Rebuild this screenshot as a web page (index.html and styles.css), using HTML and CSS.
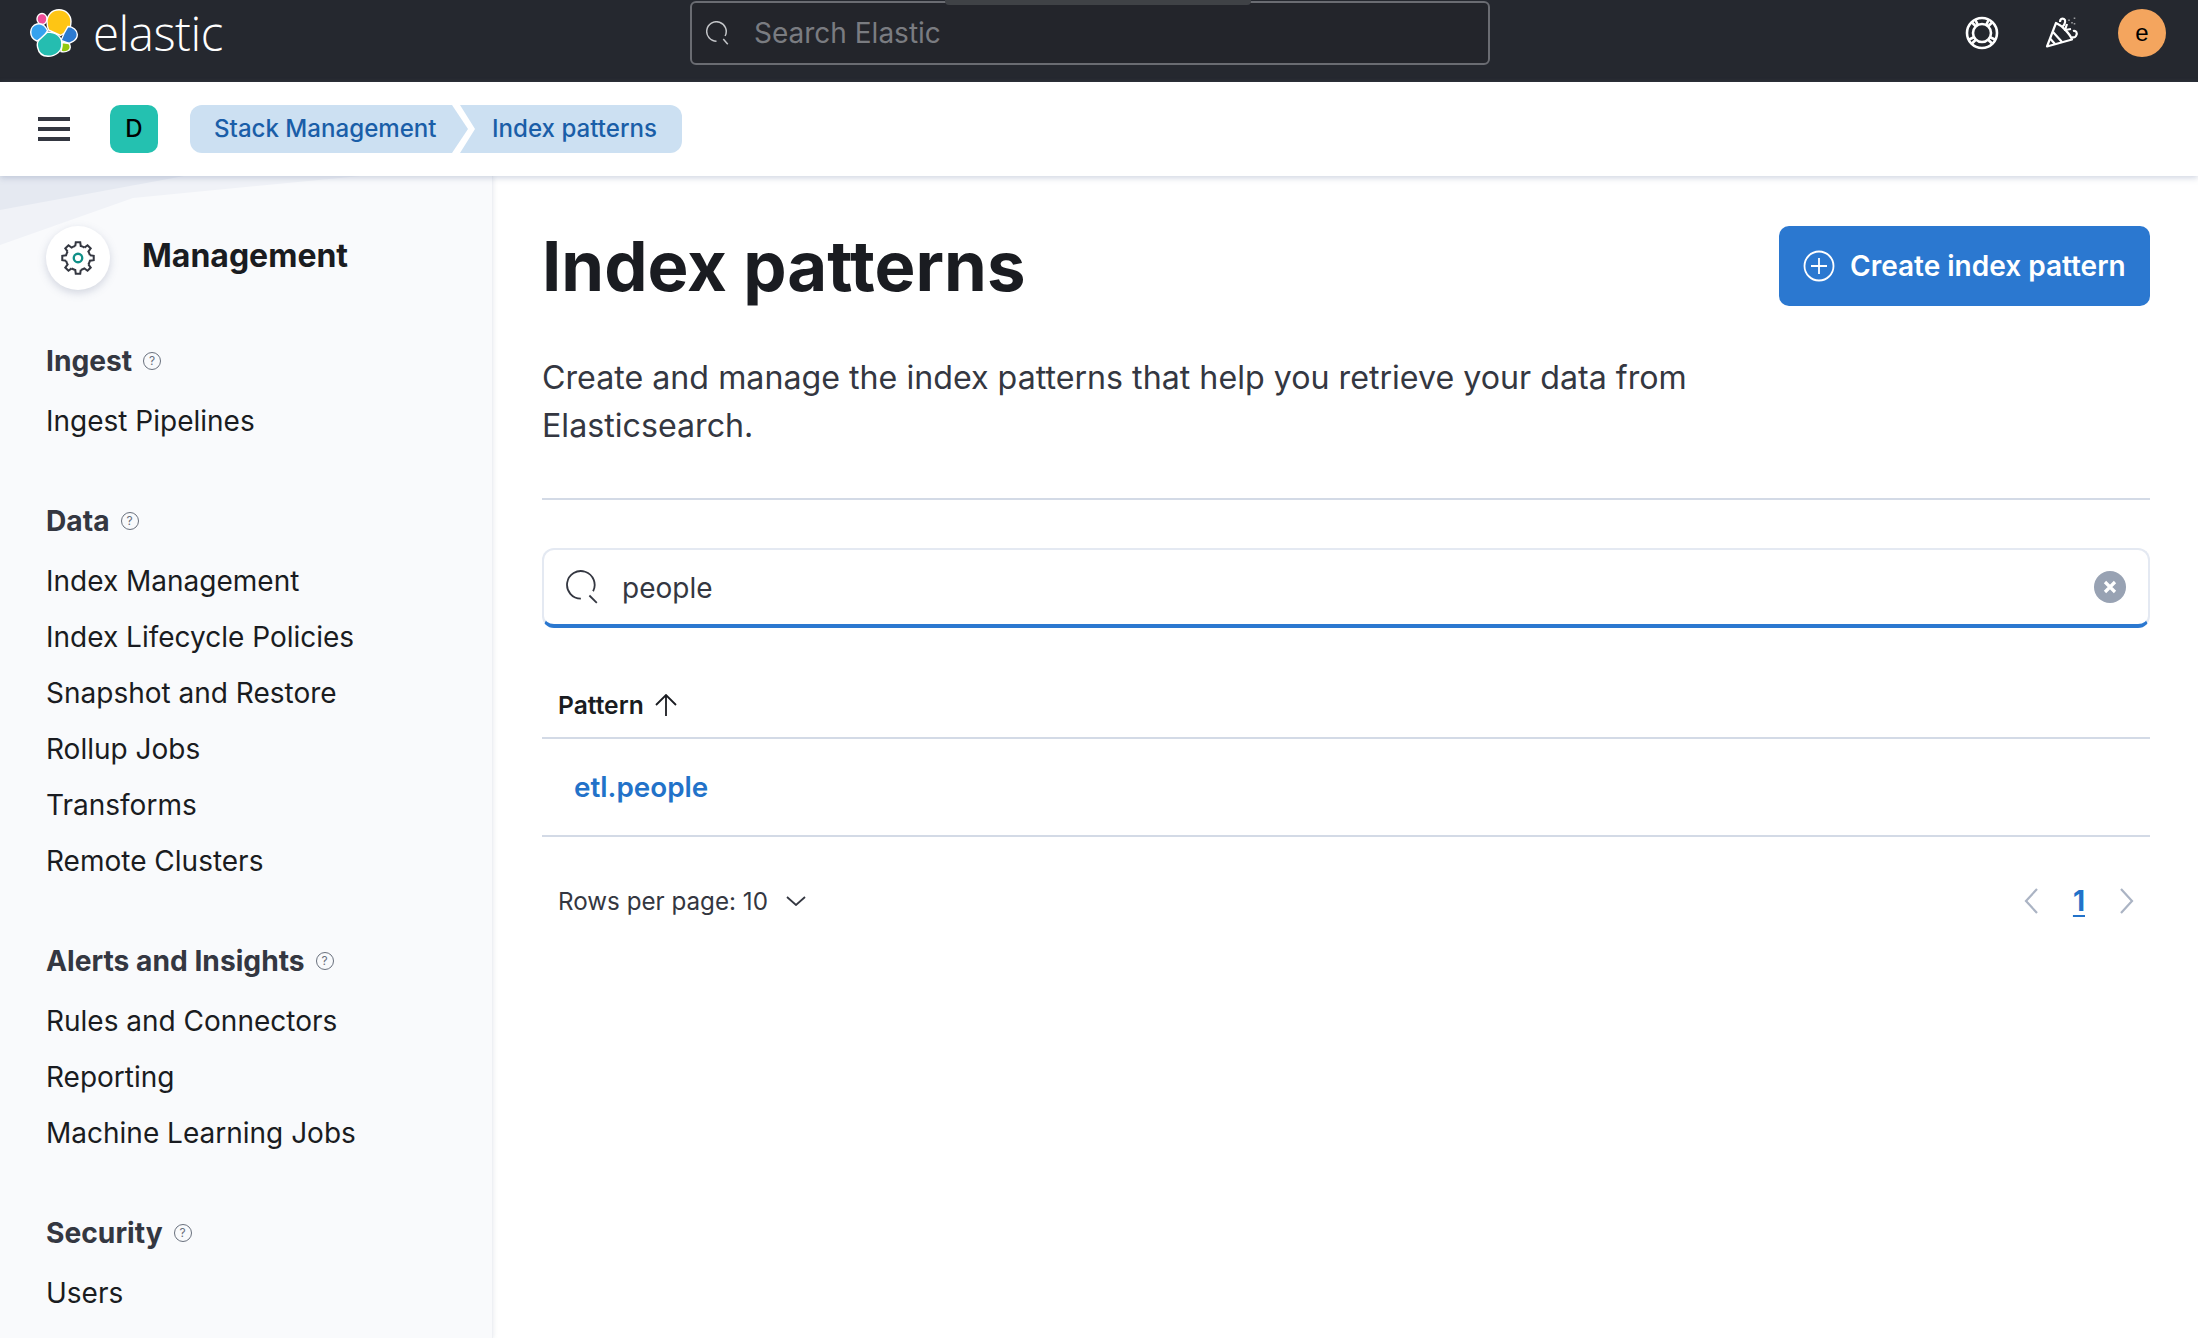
FILE: index.html
```html
<!DOCTYPE html>
<html lang="en">
<head>
    <meta charset="UTF-8">
    <title>Index patterns - Elastic</title>
    <link rel="stylesheet" href="styles.css">
</head>
<body>
    <svg class="defs" width="0" height="0">
        <defs>
            <path id="gear-tooth" d="M13.4 4.8 13.9 1.2H18.1L18.6 4.8A11.5 11.5 0 0 1 22.1 6.25"/>
        </defs>
    </svg>

    <header class="topbar">
        <div class="brand">
            <svg class="logo" width="48" height="48" viewBox="0 0 48 48">
                <g stroke="#fff" stroke-width="1.4">
                    <ellipse cx="12" cy="10" rx="5" ry="5.5" fill="#f04e98"/>
                    <path d="M29 .8C36 .8 41 6 41 12.5 41 17 39.5 21 36 23L30.5 26.5 18.5 21C17.5 18 17 16 17 13 17 6 22 .8 29 .8Z" fill="#fec514"/>
                    <path d="M7 15C11 14 15 16.500 17.500 21.500L14 27.500 7 32C3 30.500 .7 27 .7 23 .7 19.500 3 16 7 15Z" fill="#36a2ef"/>
                    <path d="M38 17.500C43 17.500 47.300 21.500 47.300 25.500 47.300 29 45.500 31 43 32.500L39 34.500 31 31.500 34 24.500Z" fill="#2c7ad0"/>
                    <path d="M17.500 23C25 23 32 27 32 35 32 42 26 47.300 18 47.300 12 47.300 8.500 43 7.500 38 7 35 7 33 9 31Z" fill="#25bdb0"/>
                    <path d="M32 33.500 39 34.500C41 37 40.500 40 38.500 41.500 36 43 33 43 31 42.500 32 39 32.500 36 32 33.500Z" fill="#93c90e"/>
                </g>
            </svg>
            <span class="wordmark">elastic</span>
        </div>
        <div class="global-search">
            <div class="search-tab"></div>
            <svg width="24" height="24" viewBox="0 0 32 32" fill="none" stroke="#c4c6c9" stroke-width="2">
                <path d="M25.500 20A13 13 0 1 0 14 27"/>
                <path d="M23 24 29 31"/>
            </svg>
            <span>Search Elastic</span>
        </div>
        <div class="top-actions">
            <svg width="34" height="34" viewBox="0 0 34 34" fill="none" stroke="#fff" stroke-width="2.600">
                <circle cx="17" cy="17" r="15"/>
                <circle cx="17" cy="17" r="9"/>
                <path d="M7 6.500 11 10.500M10.500 4 13 9.500M27 6.500 23 10.500M23.500 4 21 9.500M7 27.500 11 23.500M4 23.500 9.500 21M27 27.500 23 23.500M30 23.500 24.500 21"/>
            </svg>
            <svg width="34" height="34" viewBox="0 0 34 34" fill="none" stroke="#fff" stroke-width="2.200" stroke-linejoin="round">
                <path d="M11 7 2 30.500 27 23.500C25 18 17 9.500 11 7Z"/>
                <path d="M8 16 17 26M5.500 23 10 28"/>
                <path d="M15 6C15 3 17 2 19 3 21 4 20 7 19 9L17 11"/>
                <path d="M22 8 20 14 26 13"/>
                <path d="M28 15C31 14 33 17 31 20 30 21.500 28 21.500 27 21"/>
                <path d="M24 3.500V5M27 6V7.500M29.500 1.500V3M29.500 7V8.500" stroke="#9a9b9e" stroke-width="1.600"/>
            </svg>
            <div class="avatar-user">e</div>
        </div>
    </header>

    <nav class="subbar">
        <div class="burger"><i></i><i></i><i></i></div>
        <div class="avatar-space">D</div>
        <div class="crumbs">
            <a class="crumb crumb-first">Stack Management</a>
            <a class="crumb crumb-last">Index patterns</a>
        </div>
    </nav>

    <div class="layout">
        <aside class="sidebar">
            <svg class="sidebar-bg" width="493" height="80" viewBox="0 0 493 80">
                <path d="M0 0H360L133 22 0 69Z" fill="#f0f2f7"/>
                <path d="M0 0H184L0 34Z" fill="#e5e9f1"/>
            </svg>
            <div class="side-title">
                <div class="gear-badge">
                    <svg width="34" height="34" viewBox="0 0 32 32" fill="none" stroke="#343741" stroke-width="1.900">
                        <use href="#gear-tooth"/>
                        <use href="#gear-tooth" transform="rotate(45 16 16)"/>
                        <use href="#gear-tooth" transform="rotate(90 16 16)"/>
                        <use href="#gear-tooth" transform="rotate(135 16 16)"/>
                        <use href="#gear-tooth" transform="rotate(180 16 16)"/>
                        <use href="#gear-tooth" transform="rotate(225 16 16)"/>
                        <use href="#gear-tooth" transform="rotate(270 16 16)"/>
                        <use href="#gear-tooth" transform="rotate(315 16 16)"/>
                        <circle cx="16" cy="16" r="4" stroke="#0f8f87" stroke-width="2.200"/>
                    </svg>
                </div>
                <span>Management</span>
            </div>

            <section class="side-group">
                <h4>Ingest <span class="help">?</span></h4>
                <a>Ingest Pipelines</a>
            </section>
            <section class="side-group">
                <h4>Data <span class="help">?</span></h4>
                <a>Index Management</a>
                <a>Index Lifecycle Policies</a>
                <a>Snapshot and Restore</a>
                <a>Rollup Jobs</a>
                <a>Transforms</a>
                <a>Remote Clusters</a>
            </section>
            <section class="side-group">
                <h4>Alerts and Insights <span class="help">?</span></h4>
                <a>Rules and Connectors</a>
                <a>Reporting</a>
                <a>Machine Learning Jobs</a>
            </section>
            <section class="side-group">
                <h4>Security <span class="help">?</span></h4>
                <a>Users</a>
            </section>
        </aside>

        <main class="content">
            <div class="page-head">
                <h1>Index patterns</h1>
                <button class="btn-create">
                    <svg width="32" height="32" viewBox="0 0 32 32" fill="none" stroke="#fff" stroke-width="1.800">
                        <circle cx="16" cy="16" r="14.500"/>
                        <path d="M16 8V24M8 16H24"/>
                    </svg>
                    Create index pattern
                </button>
            </div>
            <p class="intro">Create and manage the index patterns that help you retrieve your data from Elasticsearch.</p>
            <hr class="rule">

            <div class="search-field">
                <svg width="34" height="34" viewBox="0 0 32 32" fill="none" stroke="#343741" stroke-width="1.700">
                    <path d="M25.500 20A13 13 0 1 0 14 27"/>
                    <path d="M22 24 29 31"/>
                </svg>
                <span class="search-value">people</span>
                <svg class="clear" width="32" height="32" viewBox="0 0 32 32">
                    <circle cx="16" cy="16" r="16" fill="#98a2b3"/>
                    <path d="M11 11 21 21M21 11 11 21" stroke="#fff" stroke-width="3.200"/>
                </svg>
            </div>

            <div class="table-head">
                <span>Pattern</span>
                <svg width="24" height="22" viewBox="0 0 24 22" fill="none" stroke="#1a1c21" stroke-width="1.800">
                    <path d="M12 22V1M2 11 12 1 22 11"/>
                </svg>
            </div>
            <div class="table-row"><a>etl.people</a></div>

            <div class="table-foot">
                <div class="rows-per-page">
                    <span>Rows per page: 10</span>
                    <svg width="20" height="10" viewBox="0 0 20 10" fill="none" stroke="#343741" stroke-width="1.800">
                        <path d="M1 1 10 9 19 1"/>
                    </svg>
                </div>
                <div class="pager">
                    <svg width="14" height="26" viewBox="0 0 14 26" fill="none" stroke="#abb4c4" stroke-width="2.200">
                        <path d="M13 1 2 13 13 25"/>
                    </svg>
                    <a class="page-current">1</a>
                    <svg width="14" height="26" viewBox="0 0 14 26" fill="none" stroke="#abb4c4" stroke-width="2.200">
                        <path d="M1 1 12 13 1 25"/>
                    </svg>
                </div>
            </div>
        </main>
    </div>
</body>
</html>
```

FILE: styles.css
```css
* { box-sizing: border-box; }
html, body { height: 100%; }
body { margin: 0; overflow: hidden; font-family: Inter, "Liberation Sans", sans-serif; color: #343741; background: #fff; }
.defs { position: absolute; }

.topbar { height: 82px; background: #25282f; display: flex; align-items: flex-start; position: relative; }
.brand { display: flex; align-items: center; padding: 9px 0 0 30px; }
.wordmark { font-family: "Open Sans", sans-serif; font-weight: 300; font-size: 47.500px; line-height: 48px; letter-spacing: -0.5px; color: #fff; margin-left: 15px; }
.global-search { position: absolute; left: 690px; top: 1px; width: 800px; height: 64px; border: 2px solid #6a6c72; border-radius: 6px; background: #23252b; display: flex; align-items: center; padding-left: 14px; gap: 24px; font-size: 28px; color: #7a7c81; }
.search-tab { position: absolute; left: 253px; top: -3px; width: 306px; height: 5px; background: #3f4246; border-radius: 0 0 4px 4px; }
.top-actions { margin-left: auto; display: flex; align-items: center; gap: 46px; padding: 9px 32px 0 0; }
.avatar-user { width: 48px; height: 48px; border-radius: 50%; background: #f4a55e; color: #000; display: flex; align-items: center; justify-content: center; font-size: 24px; font-family: "Liberation Sans", sans-serif; margin-left: -7px; }

.subbar { height: 94px; background: #fff; display: flex; align-items: center; padding: 0 0 0 38px; position: relative; z-index: 2; box-shadow: 0 2px 6px rgba(120, 135, 170, 0.35); }
.burger { width: 32px; display: flex; flex-direction: column; gap: 6px; }
.burger i { display: block; height: 4px; background: #343741; }
.avatar-space { width: 48px; height: 48px; margin-left: 40px; border-radius: 10px; background: #24c1b0; color: #000; display: flex; align-items: center; justify-content: center; padding-bottom: 2px; font-size: 24px; font-weight: 500; }
.crumbs { display: flex; margin-left: 32px; height: 48px; }
.crumb { display: flex; align-items: center; height: 48px; padding-bottom: 2px; background: #cce0f2; color: #1a5ea8; font-size: 24.100px; font-weight: 500; }
.crumb-first { width: 278px; padding-left: 24px; border-radius: 12px 0 0 12px; clip-path: polygon(0 0, 262px 0, 100% 50%, 262px 100%, 0 100%); }
.crumb-last { width: 222px; margin-left: -8px; padding-left: 32px; border-radius: 0 12px 12px 0; clip-path: polygon(0 0, 100% 0, 100% 100%, 0 100%, 15px 50%); }

.layout { display: flex; height: calc(100% - 176px); }
.sidebar { width: 493px; flex: none; background: #f9fafc; border-right: 1px solid #eef0f4; box-shadow: 1px 0 4px rgba(150, 160, 180, 0.18); padding: 50px 0 0 46px; position: relative; overflow: hidden; }
.sidebar-bg { position: absolute; left: 0; top: 0; }
.side-title { display: flex; align-items: center; gap: 32px; height: 64px; position: relative; font-size: 32px; font-weight: 700; color: #1a1c21; }
.side-title span { position: relative; top: -3px; }
.gear-badge { width: 64px; height: 64px; border-radius: 50%; background: #fff; box-shadow: 0 3px 8px rgba(120, 130, 160, 0.3); display: flex; align-items: center; justify-content: center; }
.side-group { margin-top: 52px; }
.side-title + .side-group { margin-top: 51px; }
.side-group h4 { margin: 0 0 12px; height: 40px; line-height: 40px; font-size: 28.200px; font-weight: 700; color: #343741; display: flex; align-items: center; gap: 11px; }
.side-group a { display: block; height: 56px; line-height: 57px; font-size: 28px; color: #1a1c21; }
.help { width: 18px; height: 18px; border: 1.500px solid #69707d; border-radius: 50%; font-size: 12px; font-weight: 400; line-height: 15px; text-align: center; color: #69707d; }

.content { flex: 1; padding: 50px 48px 0 49px; }
.page-head { display: flex; justify-content: space-between; align-items: center; height: 80px; }
h1 { margin: 0; font-size: 68.800px; font-weight: 700; line-height: 80px; color: #1a1c21; }
.btn-create { width: 371px; height: 80px; border: 0; border-radius: 10px; background: #2b78d0; color: #fff; display: flex; align-items: center; gap: 15px; padding: 0 0 0 24px; font-family: inherit; font-size: 28px; font-weight: 600; }
.intro { width: 1170px; margin: 48px 0 0; font-size: 32.200px; line-height: 48px; color: #343741; }
.rule { margin: 48px 0 0; border: 0; border-top: 2px solid #d3dae6; }

.search-field { height: 80px; margin-top: 48px; border: 2px solid #e4e9f2; border-bottom: 4px solid #2b78d0; border-radius: 12px; display: flex; align-items: center; padding: 0 22px 0 22px; }
.search-value { margin-left: 22px; padding-top: 1px; font-size: 28px; }
.clear { margin-left: auto; }

.table-head { height: 111px; border-bottom: 2px solid #d3dae6; display: flex; align-items: center; gap: 10px; padding: 44px 0 0 16px; font-size: 24.600px; font-weight: 600; color: #1a1c21; }
.table-row { height: 98px; border-bottom: 2px solid #d3dae6; display: flex; align-items: center; padding-left: 32px; font-size: 27.800px; font-weight: 600; color: #2272c9; }
.table-foot { display: flex; justify-content: space-between; align-items: center; height: 64px; margin-top: 32px; padding: 0 16px; font-size: 24.200px; }
.rows-per-page { display: flex; align-items: center; gap: 18px; }
.pager { display: flex; align-items: center; gap: 35px; }
.page-current { font-size: 28px; font-weight: 700; color: #2272c9; text-decoration: underline; text-underline-offset: 4px; }
```
